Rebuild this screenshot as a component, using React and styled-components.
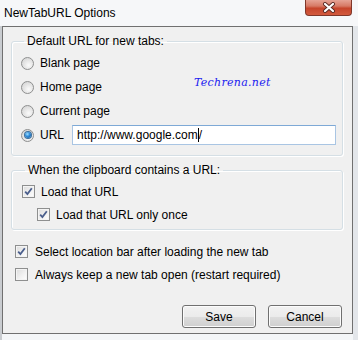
import React from "react";
import styled, { createGlobalStyle } from "styled-components";

const GlobalStyle = createGlobalStyle`
  html, body {
    margin: 0;
    padding: 0;
    background: #eef1f4;
  }
  * {
    box-sizing: border-box;
  }
`;

const font = `"Liberation Sans", Arial, sans-serif`;

const Window = styled.div`
  width: 358px;
  height: 340px;
  display: flex;
  flex-direction: column;
  font-family: ${font};
  font-size: 12px;
  color: #000;
  background: linear-gradient(to right, #c9ccd0 0, #c9ccd0 2px, #f4f6f8 2px, #f4f6f8 353px, #e3e6ea 353px);
  overflow: hidden;
`;

const TitleBar = styled.div`
  height: 26px;
  flex: none;
  display: flex;
  justify-content: space-between;
  align-items: flex-start;
  padding-left: 4px;
  background: #f6f7f9;
`;

const Title = styled.div`
  padding-top: 6px;
  font-size: 12px;
  line-height: 14px;
`;

const CloseButton = styled.div`
  width: 47px;
  height: 16px;
  margin-right: 6px;
  border: 1px solid #80372a;
  border-top: none;
  border-radius: 0 0 4px 4px;
  background: linear-gradient(to bottom, #e6a395 0%, #d77a66 40%, #c6452c 55%, #d35a3e 100%);
  display: flex;
  align-items: center;
  justify-content: center;
`;

const Client = styled.div`
  flex: 1;
  margin: 0 5px 6px 2px;
  border: 1px solid #707070;
  background: #f0f0f0;
  display: flex;
  flex-direction: column;
  padding: 6px 9px 5px 8px;
`;

const Group = styled.fieldset`
  position: relative;
  margin: 0 0 ${(p) => p.$gap || 0}px 0;
  padding: ${(p) => p.$pad};
  border: 1px solid #d5dfe5;
  border-radius: 3px;
  box-shadow: inset 1px 1px 0 #fff, 1px 1px 0 #fff;
  min-width: 0;
`;

const Legend = styled.legend`
  margin-left: 3px;
  padding: 0 3px;
  line-height: 16px;
`;

const Row = styled.div`
  display: flex;
  align-items: center;
  height: ${(p) => p.$h || 24}px;
  padding-left: ${(p) => p.$indent || 0}px;
`;

const Label = styled.span`
  margin-left: ${(p) => p.$gap || 6}px;
  white-space: nowrap;
`;

const RadioOuter = styled.span`
  width: 13px;
  height: 13px;
  flex: none;
  border-radius: 50%;
  border: 1px solid #8e8f8f;
  background: radial-gradient(circle at 60% 65%, #fbfbfb 0%, #e6e6e6 45%, #cfcfcf 100%);
  display: flex;
  align-items: center;
  justify-content: center;
`;

const RadioDot = styled.span`
  width: 6px;
  height: 6px;
  border-radius: 50%;
  background: radial-gradient(circle at 40% 35%, #9fe0ff 0%, #2e8ad8 45%, #0b4f92 100%);
  box-shadow: 0 0 0 1px #3c6f9b;
`;

const CheckBox = styled.span`
  width: 13px;
  height: 13px;
  flex: none;
  border: 1px solid #8e8f8f;
  background: linear-gradient(135deg, #dcdcdc 0%, #f2f2f2 60%, #ffffff 100%);
  box-shadow: inset 0 0 0 1px #f4f4f4;
  display: flex;
  align-items: center;
  justify-content: center;
`;

const TextBox = styled.div`
  width: 269px;
  height: 20px;
  margin-left: 8px;
  border: 1px solid #a9c5e3;
  border-top-color: #7ea9d6;
  background: #fff;
  padding: 0 4px;
  display: flex;
  align-items: center;
  white-space: nowrap;
`;

const Caret = styled.span`
  display: inline-block;
  width: 1px;
  height: 14px;
  background: #000;
  vertical-align: middle;
`;

const Watermark = styled.span`
  position: absolute;
  left: 182px;
  top: 27px;
  font-family: "DejaVu Serif", serif;
  font-style: italic;
  font-size: 11px;
  color: #2020f0;
  letter-spacing: 0.3px;
`;

const Options = styled.div`
  margin-top: 10px;
  padding-left: 4px;
`;

const ButtonRow = styled.div`
  margin-top: auto;
  display: flex;
  justify-content: flex-end;
  gap: 12px;
  padding-right: 1px;
`;

const Button = styled.div`
  width: 74px;
  height: 23px;
  border: 1px solid #707070;
  border-radius: 3px;
  background: linear-gradient(to bottom, #f2f2f2 0%, #ebebeb 50%, #dddddd 51%, #cfcfcf 100%);
  box-shadow: inset 0 0 0 1px #fcfcfc;
  display: flex;
  align-items: center;
  justify-content: center;
`;

const Radio = ({ checked, label }) => (
  <Row>
    <RadioOuter>{checked && <RadioDot />}</RadioOuter>
    <Label>{label}</Label>
  </Row>
);

const Check = ({ checked, label, indent, h, gap }) => (
  <Row $indent={indent} $h={h}>
    <CheckBox>
      {checked && (
        <svg width="9" height="9" viewBox="0 0 9 9">
          <path d="M1.2 4.6 L3.4 7 L7.8 1.3" fill="none" stroke="#4a5e8c" strokeWidth="1.8" />
        </svg>
      )}
    </CheckBox>
    <Label $gap={gap}>{label}</Label>
  </Row>
);

export default function App() {
  return (
    <>
      <GlobalStyle />
      <Window>
        <TitleBar>
          <Title>NewTabURL Options</Title>
          <CloseButton>
            <svg width="14" height="11" viewBox="0 0 14 11">
              <path d="M3 2 L11 9 M11 2 L3 9" stroke="#5a2a24" strokeWidth="4" strokeLinecap="round" />
              <path d="M3 2 L11 9 M11 2 L3 9" stroke="#fff" strokeWidth="2.2" strokeLinecap="round" />
            </svg>
          </CloseButton>
        </TitleBar>
        <Client>
          <Group $pad="2px 6px 8px 9px" $gap={6}>
            <Legend>Default URL for new tabs:</Legend>
            <Watermark>Techrena.net</Watermark>
            <Radio label="Blank page" />
            <Radio label="Home page" />
            <Radio label="Current page" />
            <Row>
              <RadioOuter>
                <RadioDot />
              </RadioOuter>
              <Label>URL</Label>
              <TextBox>
                http://www.google.com<Caret />/
              </TextBox>
            </Row>
          </Group>
          <Group $pad="2px 6px 3px 10px">
            <Legend>When the clipboard contains a URL:</Legend>
            <Check checked label="Load that URL" h={23} />
            <Check checked label="Load that URL only once" h={23} indent={15} />
          </Group>
          <Options>
            <Check checked label="Select location bar after loading the new tab" h={23} gap={7} />
            <Check label="Always keep a new tab open (restart required)" h={23} gap={7} />
          </Options>
          <ButtonRow>
            <Button>Save</Button>
            <Button>Cancel</Button>
          </ButtonRow>
        </Client>
      </Window>
    </>
  );
}
